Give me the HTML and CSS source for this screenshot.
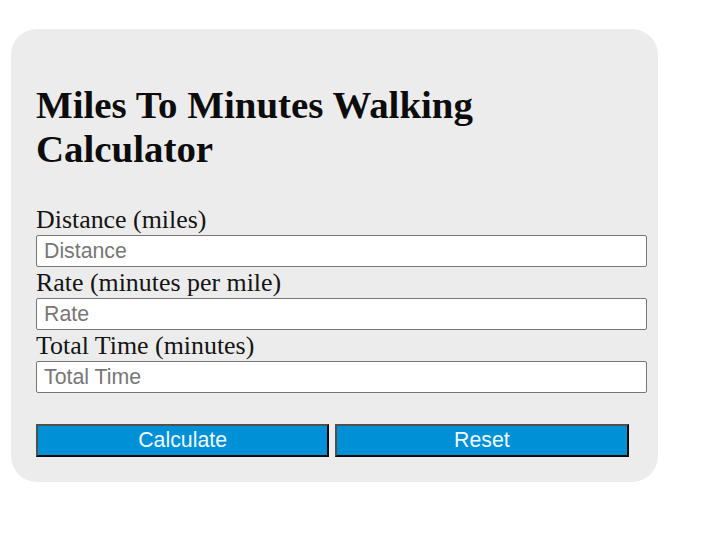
FILE: index.html
```html
<!DOCTYPE html>
<html lang="en">
<head>
<meta charset="utf-8">
<title>Miles To Minutes Walking Calculator</title>
<link rel="stylesheet" href="styles.css">
</head>
<body>
<div class="card">
  <h1 class="title">Miles To Minutes Walking Calculator</h1>
  <form class="form">
    <label class="label" for="distance">Distance (miles)</label>
    <input class="field" id="distance" type="text" placeholder="Distance">
    <label class="label" for="rate">Rate (minutes per mile)</label>
    <input class="field" id="rate" type="text" placeholder="Rate">
    <label class="label" for="total">Total Time (minutes)</label>
    <input class="field" id="total" type="text" placeholder="Total Time">
    <div class="actions">
      <button class="btn" type="button">Calculate</button>
      <button class="btn" type="reset">Reset</button>
    </div>
  </form>
</div>
</body>
</html>
```

FILE: styles.css
```css
html, body {
  margin: 0;
  padding: 0;
  background: #ffffff;
}

body {
  font-family: "Liberation Serif", "Times New Roman", serif;
  color: #111111;
}

.card {
  margin: 29px 0 0 11px;
  width: 647px;
  box-sizing: border-box;
  padding: 54px 11px 25px 25px;
  background: #ececec;
  border-radius: 26px;
}

.title {
  margin: 0 0 33px 0;
  max-width: 560px;
  font-size: 38.9px;
  line-height: 44px;
  font-weight: bold;
  color: #0c0c0c;
}

.form {
  margin: 0;
}

.label {
  display: block;
  font-size: 25.9px;
  line-height: 31px;
  color: #141414;
}

.field {
  display: block;
  width: 100%;
  height: 32px;
  box-sizing: border-box;
  margin: 0;
  padding: 0 7px;
  border: 1px solid #777777;
  border-radius: 2px;
  background: #ffffff;
  font-family: "Liberation Sans", Arial, sans-serif;
  font-size: 21.3px;
  color: #222222;
}

.field::placeholder {
  color: #777777;
}

.actions {
  display: flex;
  gap: 6px;
  margin-top: 31px;
}

.btn {
  width: 48%;
  height: 33px;
  box-sizing: border-box;
  margin: 0;
  padding: 0;
  background: #0090d6;
  border-style: solid;
  border-width: 2px;
  border-color: #505050 #0a0a0a #0a0a0a #505050;
  font-family: "Liberation Sans", Arial, sans-serif;
  font-size: 21.3px;
  color: #f2faff;
  cursor: pointer;
}
```
